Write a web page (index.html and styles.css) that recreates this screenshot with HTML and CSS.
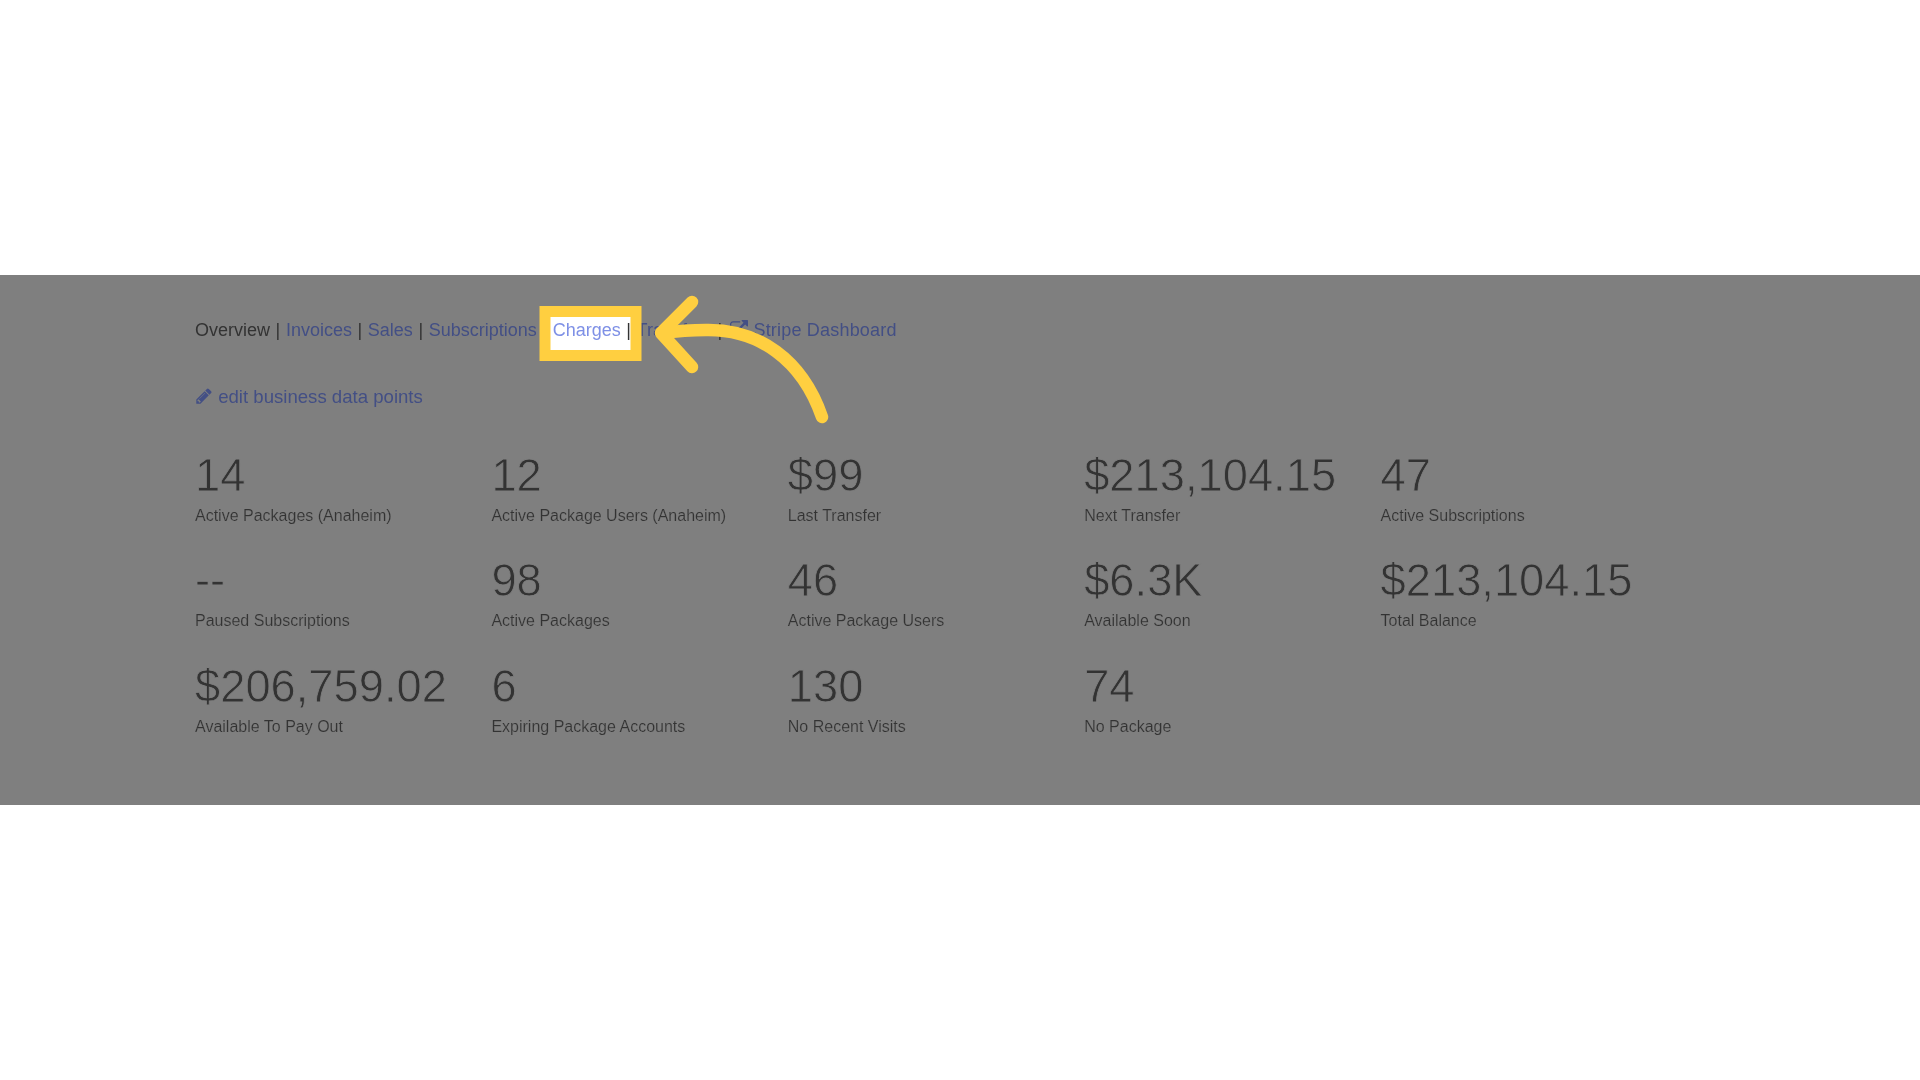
FILE: index.html
```html
<!DOCTYPE html>
<html>
<head>
    <link rel="stylesheet" href="styles.css">
</head>
<body>

<div class="band">
    <div class="spot-fill"></div>

    <ul class="menu">
        <li class="menu-item">Overview</li>
        <li class="menu-item"><a href="#invoices">Invoices</a></li>
        <li class="menu-item"><a href="#sales">Sales</a></li>
        <li class="menu-item"><a href="#subscriptions">Subscriptions</a></li>
        <li class="menu-item"><a href="#charges" class="menu-lit">Charges</a></li>
        <li class="menu-item"><a href="#transfers">Transfers</a></li>
        <li class="menu-item">
            <a href="#stripe">
                <svg class="icon icon-ext" viewBox="0 0 1792 1792"><path d="M1408 928v320q0 119-84.5 203.5t-203.5 84.5h-832q-119 0-203.5-84.5t-84.5-203.5v-832q0-119 84.5-203.5t203.5-84.5h704q14 0 23 9t9 23v64q0 14-9 23t-23 9h-704q-66 0-113 47t-47 113v832q0 66 47 113t113 47h832q66 0 113-47t47-113v-320q0-14 9-23t23-9h64q14 0 23 9t9 23zm384-864v512q0 26-19 45t-45 19-45-19l-176-176-652 652q-10 10-23 10t-23-10l-114-114q-10-10-10-23t10-23l652-652-176-176q-19-19-19-45t19-45 45-19h512q26 0 45 19t19 45z"/></svg>
                Stripe Dashboard
            </a>
        </li>
    </ul>

    <a class="edit-link" href="#edit">
        <svg class="icon" viewBox="0 0 1792 1792"><path d="M491 1536l91-91-235-235-91 91v107h128v128h107zm523-928q0-22-22-22-10 0-17 7l-542 542q-7 7-7 17 0 22 22 22 10 0 17-7l542-542q7-7 7-17zm-54-192l416 416-832 832h-416v-416zm683 96q0 53-37 90l-166 166-416-416 166-165q36-38 90-38 53 0 91 38l235 234q37 39 37 91z"/></svg>
        edit business data points
    </a>

    <div class="stats">
        <div class="stat"><div class="stat-value">14</div><div class="stat-label">Active Packages (Anaheim)</div></div>
        <div class="stat"><div class="stat-value">12</div><div class="stat-label">Active Package Users (Anaheim)</div></div>
        <div class="stat"><div class="stat-value">$99</div><div class="stat-label">Last Transfer</div></div>
        <div class="stat"><div class="stat-value">$213,104.15</div><div class="stat-label">Next Transfer</div></div>
        <div class="stat"><div class="stat-value">47</div><div class="stat-label">Active Subscriptions</div></div>

        <div class="stat"><div class="stat-value">--</div><div class="stat-label">Paused Subscriptions</div></div>
        <div class="stat"><div class="stat-value">98</div><div class="stat-label">Active Packages</div></div>
        <div class="stat"><div class="stat-value">46</div><div class="stat-label">Active Package Users</div></div>
        <div class="stat"><div class="stat-value">$6.3K</div><div class="stat-label">Available Soon</div></div>
        <div class="stat"><div class="stat-value">$213,104.15</div><div class="stat-label">Total Balance</div></div>

        <div class="stat"><div class="stat-value">$206,759.02</div><div class="stat-label">Available To Pay Out</div></div>
        <div class="stat"><div class="stat-value">6</div><div class="stat-label">Expiring Package Accounts</div></div>
        <div class="stat"><div class="stat-value">130</div><div class="stat-label">No Recent Visits</div></div>
        <div class="stat"><div class="stat-value">74</div><div class="stat-label">No Package</div></div>
    </div>

    <!-- frame and arrow sit on top of the menu -->
    <svg class="callout" viewBox="0 0 1920 530">
        <rect x="545" y="36.5" width="91" height="44" fill="none" stroke="#ffcf40" stroke-width="11"/>
        <path d="M822 142 C802 84 758 54 706 55 Q685 55 662 58" fill="none" stroke="#ffcf40" stroke-width="12.5" stroke-linecap="round"/>
        <path d="M692 27 L661 58 L692 92" fill="none" stroke="#ffcf40" stroke-width="12.5" stroke-linecap="round" stroke-linejoin="round"/>
    </svg>
</div>

</body>
</html>
```

FILE: styles.css
```css
html, body {
    margin: 0;
    height: 100%;
    overflow: hidden;
    background-color: #fff;
}

body {
    padding-top: 275px;
    box-sizing: border-box;
    font-family: "Liberation Sans", sans-serif;
    color: #333;
}

.band {
    position: relative;
    height: 530px;
    padding: 42px 0 0 195px;
    box-sizing: border-box;
    background-color: #7f7f7f;
}

.spot-fill {
    position: absolute;
    left: 545px;
    top: 36px;
    width: 91px;
    height: 46px;
    background-color: #fff;
}

.menu {
    position: relative;
    display: flex;
    margin: 0;
    padding: 0;
    list-style-type: none;
    font-size: 18px;
    line-height: 26px;
    filter: blur(0.5px);
}

.menu-item + .menu-item::before {
    content: "|";
    margin: 0 5.6px;
    color: #333;
}

.menu a, .edit-link {
    color: #434f85;
    text-decoration: none;
}

.menu a.menu-lit {
    color: #7e90e6;
}

.menu-item:last-child {
    letter-spacing: 0.2px;
}

.icon {
    width: 18px;
    height: 18px;
    fill: currentColor;
    vertical-align: -2px;
}

.icon-ext {
    margin-left: -3px;
}

.edit-link {
    position: relative;
    display: block;
    margin-top: 41px;
    font-size: 18.6px;
    line-height: 26px;
    filter: blur(0.5px);
}

.stats {
    display: grid;
    grid-template-columns: repeat(5, 296.4px);
    grid-auto-rows: 105.3px;
    margin-top: 40px;
    filter: blur(0.5px);
}

/* thin the regular face down towards a light weight */
.stat-value {
    font-size: 45.3px;
    line-height: 52px;
    -webkit-text-stroke: 0.8px #7f7f7f;
}

.stat-label {
    margin-top: 3px;
    font-size: 16px;
    line-height: 22px;
    -webkit-text-stroke: 0.2px #7f7f7f;
}

.callout {
    position: absolute;
    left: 0;
    top: 0;
    width: 1920px;
    height: 530px;
}
```
